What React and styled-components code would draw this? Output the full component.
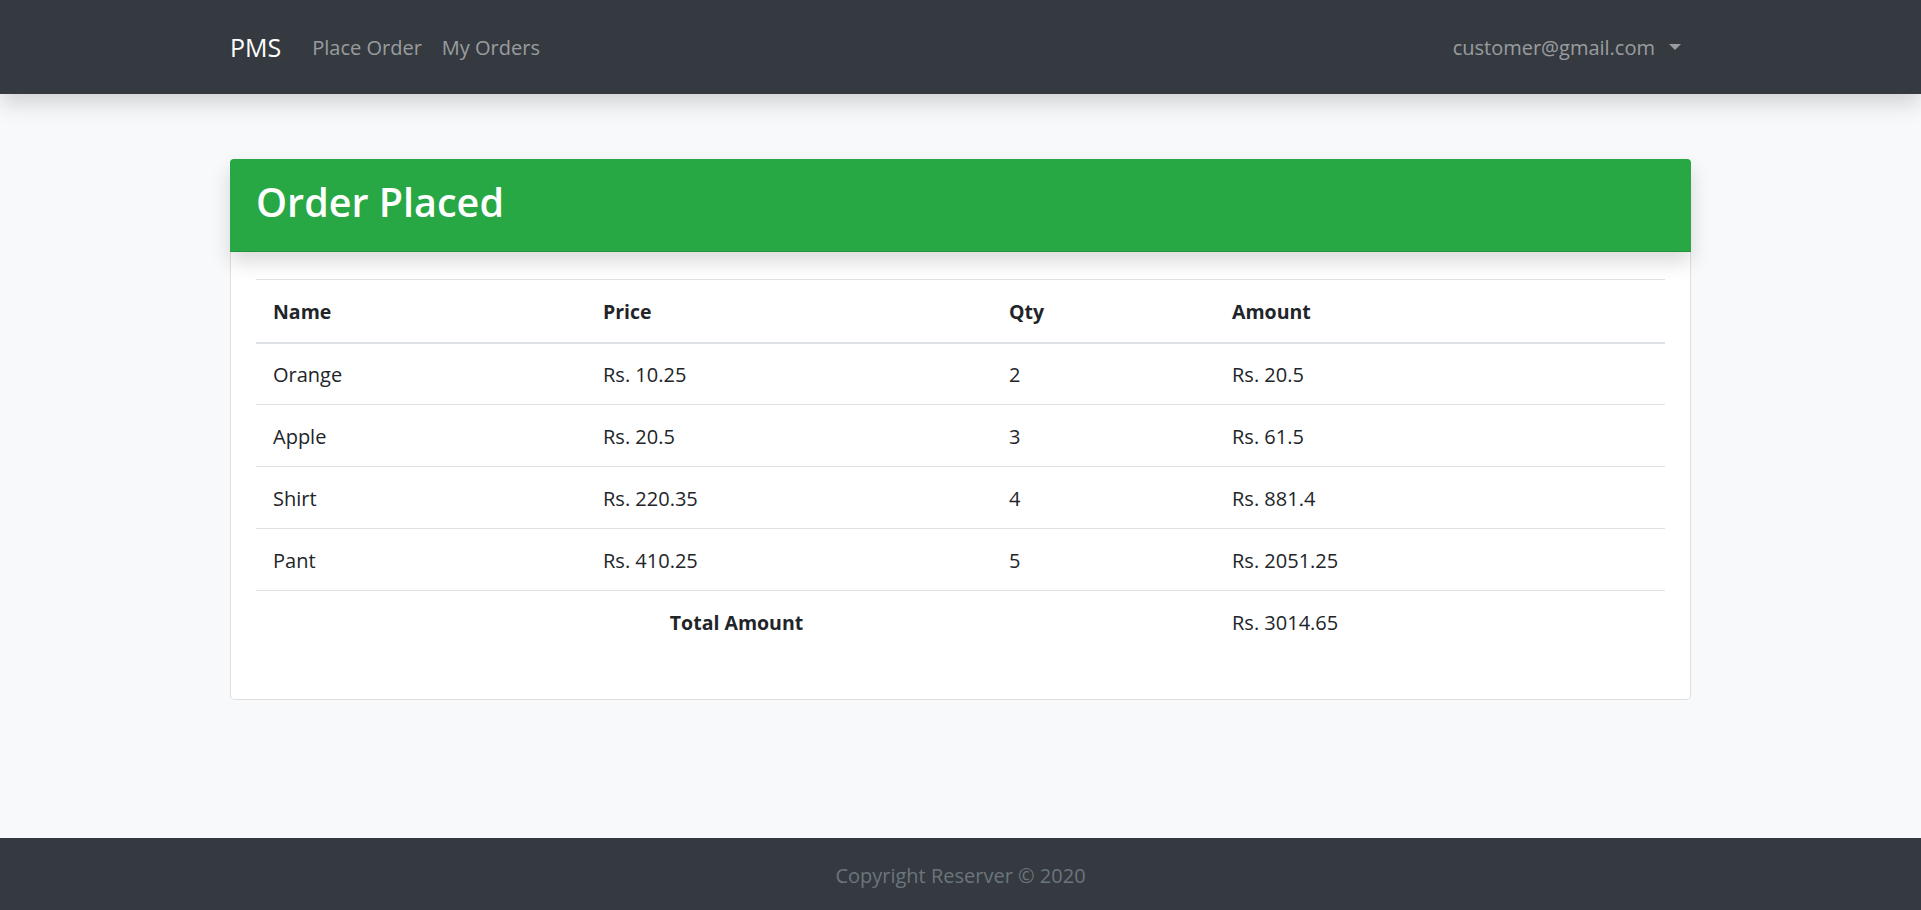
import React from "react";
import styled, { createGlobalStyle } from "styled-components";

const Global = createGlobalStyle`
  * { box-sizing: border-box; }
  html, body { margin: 0; padding: 0; }
  body {
    background: #f8f9fa;
    font-family: "Open Sans", "Noto Sans", "Liberation Sans", sans-serif;
    font-size: 20px;
    line-height: 1.5;
    color: #212529;
  }
`;

const Page = styled.div`
  min-height: 910px;
  display: flex;
  flex-direction: column;
`;

const NavBar = styled.nav`
  height: 94px;
  background: #343a40;
  box-shadow: 0 10px 20px rgba(0, 0, 0, 0.15);
  position: relative;
  z-index: 2;
`;

const NavInner = styled.div`
  width: 1461px;
  height: 100%;
  margin: 0 auto;
  display: flex;
  align-items: center;
  padding-top: 2px;
`;

const Brand = styled.a`
  font-size: 25px;
  color: #fff;
  margin-right: 31px;
  text-decoration: none;
`;

const NavLink = styled.a`
  font-size: 20px;
  color: rgba(255, 255, 255, 0.5);
  margin-right: 20px;
  text-decoration: none;
`;

const Spacer = styled.div`
  flex: 1;
`;

const UserMenu = styled.a`
  font-size: 20px;
  color: rgba(255, 255, 255, 0.5);
  display: flex;
  align-items: center;
  margin-right: 10px;
  text-decoration: none;
`;

const Caret = styled.span`
  width: 0;
  height: 0;
  margin-left: 14px;
  border-left: 6px solid transparent;
  border-right: 6px solid transparent;
  border-top: 6px solid rgba(255, 255, 255, 0.5);
  margin-top: -2px;
`;

const Main = styled.main`
  flex: 1;
  padding-top: 65px;
`;

const Card = styled.div`
  width: 1461px;
  margin: 0 auto;
  background: #fff;
  border: 1px solid rgba(0, 0, 0, 0.125);
  border-radius: 5px;
`;

const CardHeader = styled.div`
  background: #28a745;
  color: #fff;
  height: 93px;
  padding: 0 25px;
  display: flex;
  align-items: center;
  border-bottom: 1px solid rgba(0, 0, 0, 0.125);
  border-radius: 4px 4px 0 0;
  box-shadow: 0 10px 20px rgba(0, 0, 0, 0.15);
  margin: -1px -1px 0;
`;

const Title = styled.h1`
  margin: 0;
  font-size: 39.5px;
  font-weight: 600;
  line-height: 1.2;
  padding-bottom: 4px;
  padding-left: 1px;
`;

const CardBody = styled.div`
  padding: 27px 25px 26px;
`;

const Table = styled.table`
  width: 100%;
  border-collapse: collapse;
  margin-bottom: 20px;
`;

const HeadCell = styled.th`
  text-align: left;
  font-weight: 700;
  font-size: 19.5px;
  height: 63px;
  padding: 1px 15px 0 17px;
  border-top: 1px solid #dee2e6;
  border-bottom: 2px solid #dee2e6;
  vertical-align: middle;
`;

const Cell = styled.td`
  height: 62px;
  padding: 2px 15px 0 17px;
  border-top: 1px solid #dee2e6;
  vertical-align: middle;
  text-align: ${(p) => (p.$center ? "center" : "left")};
  font-weight: ${(p) => (p.$bold ? 700 : 400)};
  font-size: ${(p) => (p.$bold ? "19.5px" : "20px")};
`;

const Footer = styled.footer`
  height: 72px;
  background: #343a40;
  color: #6c757d;
  font-size: 20px;
  display: flex;
  align-items: center;
  justify-content: center;
  padding-top: 3px;
`;

const items = [
  { name: "Orange", price: "10.25", qty: 2, amount: "20.5" },
  { name: "Apple", price: "20.5", qty: 3, amount: "61.5" },
  { name: "Shirt", price: "220.35", qty: 4, amount: "881.4" },
  { name: "Pant", price: "410.25", qty: 5, amount: "2051.25" },
];

export default function App() {
  return (
    <>
      <Global />
      <Page>
        <NavBar>
          <NavInner>
            <Brand href="#">PMS</Brand>
            <NavLink href="#">Place Order</NavLink>
            <NavLink href="#">My Orders</NavLink>
            <Spacer />
            <UserMenu href="#">
              customer@gmail.com
              <Caret />
            </UserMenu>
          </NavInner>
        </NavBar>
        <Main>
          <Card>
            <CardHeader>
              <Title>Order Placed</Title>
            </CardHeader>
            <CardBody>
              <Table>
                <colgroup>
                  <col style={{ width: 330 }} />
                  <col style={{ width: 406 }} />
                  <col style={{ width: 223 }} />
                  <col />
                </colgroup>
                <thead>
                  <tr>
                    <HeadCell>Name</HeadCell>
                    <HeadCell>Price</HeadCell>
                    <HeadCell>Qty</HeadCell>
                    <HeadCell>Amount</HeadCell>
                  </tr>
                </thead>
                <tbody>
                  {items.map((it) => (
                    <tr key={it.name}>
                      <Cell>{it.name}</Cell>
                      <Cell>Rs. {it.price}</Cell>
                      <Cell>{it.qty}</Cell>
                      <Cell>Rs. {it.amount}</Cell>
                    </tr>
                  ))}
                  <tr>
                    <Cell colSpan={3} $center $bold>
                      Total Amount
                    </Cell>
                    <Cell>Rs. 3014.65</Cell>
                  </tr>
                </tbody>
              </Table>
            </CardBody>
          </Card>
        </Main>
        <Footer>Copyright Reserver © 2020</Footer>
      </Page>
    </>
  );
}
